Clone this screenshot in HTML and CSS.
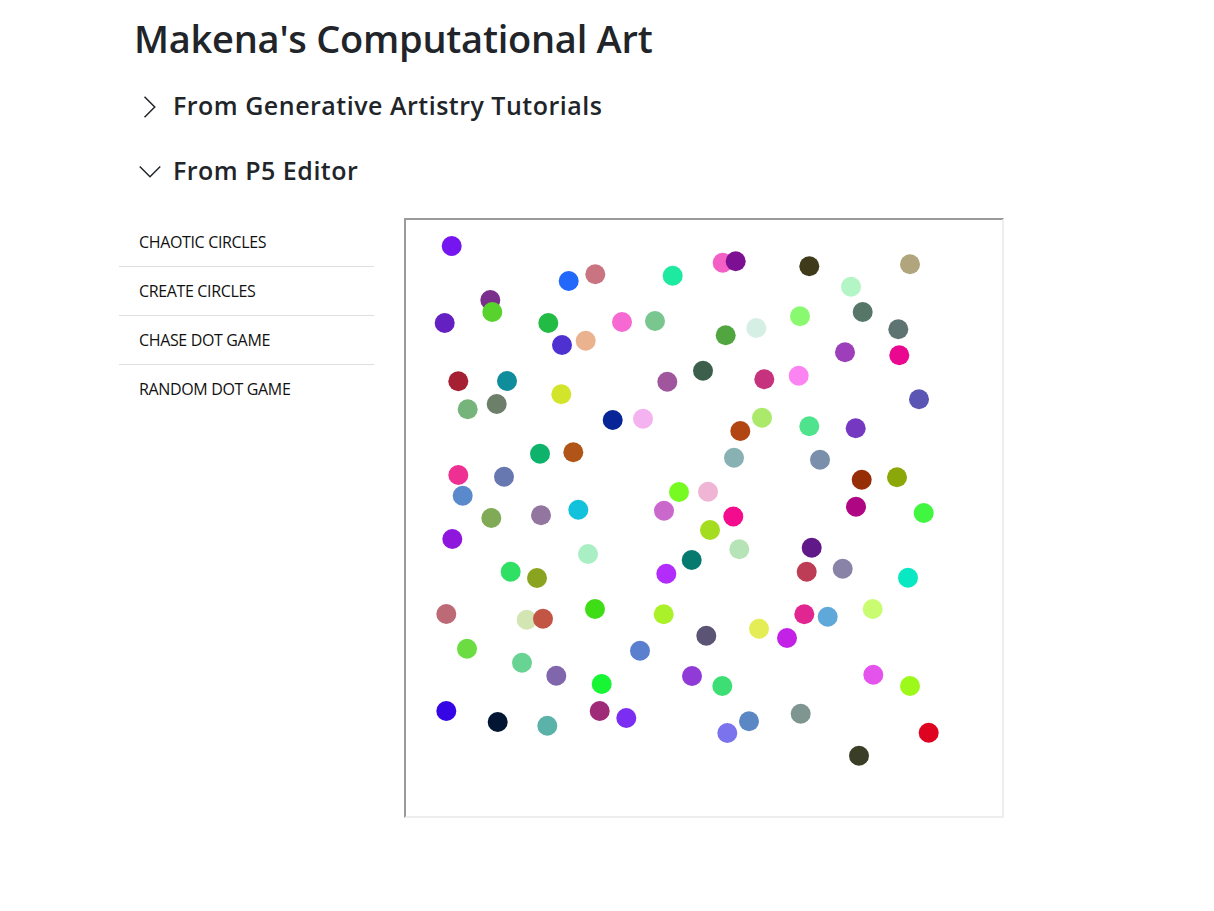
FILE: index.html
```html
<!DOCTYPE html>
<html lang="en">
<head>
<meta charset="utf-8">
<title>Makena's Computational Art</title>
<link rel="stylesheet" href="styles.css">
</head>
<body>
<main class="page">
  <h1 class="title">Makena's Computational Art</h1>

  <section class="group">
    <div class="group-head">
      <svg class="chev" viewBox="0 0 22 22" aria-hidden="true"><path d="M5.5 0.75 L15.75 11 L5.5 21.25"/></svg>
      <h4 class="group-title">From Generative Artistry Tutorials</h4>
    </div>
  </section>

  <section class="group open">
    <div class="group-head">
      <svg class="chev" viewBox="0 0 22 22" aria-hidden="true"><path d="M0.75 5.5 L11 15.75 L21.25 5.5"/></svg>
      <h4 class="group-title">From P5 Editor</h4>
    </div>
    <div class="group-body">
      <ul class="sketch-list">
        <li class="sketch-item">Chaotic Circles</li>
        <li class="sketch-item">Create Circles</li>
        <li class="sketch-item">Chase Dot Game</li>
        <li class="sketch-item">Random Dot Game</li>
      </ul>
      <div class="canvas">
        <svg class="art" width="596" height="596" viewBox="406 220 596 596">
          <circle cx="451.7" cy="246" r="10" fill="#7516f0"/>
          <circle cx="568.7" cy="281" r="10" fill="#2269fb"/>
          <circle cx="595.3" cy="274.3" r="10" fill="#c97480"/>
          <circle cx="672.7" cy="275.7" r="10" fill="#1de9a0"/>
          <circle cx="490.3" cy="300" r="10" fill="#7b2f8c"/>
          <circle cx="492.3" cy="312" r="10" fill="#58d22c"/>
          <circle cx="444.7" cy="323" r="10" fill="#6420c0"/>
          <circle cx="548.3" cy="323" r="10" fill="#22bb44"/>
          <circle cx="562" cy="345" r="10" fill="#4f31d2"/>
          <circle cx="585.7" cy="340.7" r="10" fill="#ebb290"/>
          <circle cx="622" cy="322" r="10" fill="#f668d2"/>
          <circle cx="655" cy="321" r="10" fill="#79c78f"/>
          <circle cx="458.3" cy="381.3" r="10" fill="#a52033"/>
          <circle cx="507" cy="381" r="10" fill="#0f8d9a"/>
          <circle cx="467.7" cy="409.3" r="10" fill="#77b47c"/>
          <circle cx="496.7" cy="404" r="10" fill="#6b7f69"/>
          <circle cx="561.3" cy="394.3" r="10" fill="#d2e52a"/>
          <circle cx="667.3" cy="381.7" r="10" fill="#a0569c"/>
          <circle cx="703" cy="370.7" r="10" fill="#3b5f4a"/>
          <circle cx="612.7" cy="420" r="10" fill="#072596"/>
          <circle cx="643" cy="418.7" r="10" fill="#f4b2f0"/>
          <circle cx="540" cy="453.7" r="10" fill="#0db36b"/>
          <circle cx="573.3" cy="452.3" r="10" fill="#b05517"/>
          <circle cx="458.3" cy="475" r="10" fill="#ef3093"/>
          <circle cx="504" cy="476.7" r="10" fill="#6777b0"/>
          <circle cx="462.7" cy="495.7" r="10" fill="#5b8acc"/>
          <circle cx="491.3" cy="518" r="10" fill="#81aa57"/>
          <circle cx="541" cy="515.3" r="10" fill="#93769f"/>
          <circle cx="578.3" cy="509.7" r="10" fill="#12c2dc"/>
          <circle cx="679" cy="492" r="10" fill="#77fa22"/>
          <circle cx="664" cy="510.7" r="10" fill="#cb68cc"/>
          <circle cx="708" cy="491.7" r="10" fill="#f0b5d4"/>
          <circle cx="722.7" cy="262.7" r="10" fill="#f45fc5"/>
          <circle cx="735.7" cy="261.3" r="10" fill="#7d0f93"/>
          <circle cx="809.3" cy="266.3" r="10" fill="#3e3a1a"/>
          <circle cx="910" cy="264.3" r="10" fill="#b1a57e"/>
          <circle cx="851" cy="286.7" r="10" fill="#b4f5c5"/>
          <circle cx="862.7" cy="312" r="10" fill="#56766a"/>
          <circle cx="898.3" cy="329.3" r="10" fill="#5d7473"/>
          <circle cx="800" cy="316.3" r="10" fill="#89fa70"/>
          <circle cx="756.3" cy="328" r="10" fill="#d5efe4"/>
          <circle cx="725.7" cy="335.3" r="10" fill="#52a63f"/>
          <circle cx="845" cy="352.3" r="10" fill="#9d3fbb"/>
          <circle cx="899.3" cy="355.3" r="10" fill="#e9088f"/>
          <circle cx="764.3" cy="379.3" r="10" fill="#c6327e"/>
          <circle cx="798.7" cy="375.7" r="10" fill="#fc84f2"/>
          <circle cx="919" cy="399.3" r="10" fill="#5b55b3"/>
          <circle cx="762" cy="417.7" r="10" fill="#abe96a"/>
          <circle cx="740.3" cy="431" r="10" fill="#b24612"/>
          <circle cx="809.3" cy="426.3" r="10" fill="#50e38e"/>
          <circle cx="855.7" cy="428.3" r="10" fill="#7439c0"/>
          <circle cx="734" cy="457.7" r="10" fill="#87b1b3"/>
          <circle cx="820" cy="459.7" r="10" fill="#7a8fab"/>
          <circle cx="861.7" cy="479.7" r="10" fill="#972f06"/>
          <circle cx="897" cy="477.3" r="10" fill="#8ba708"/>
          <circle cx="856" cy="506.7" r="10" fill="#af0683"/>
          <circle cx="923.7" cy="513" r="10" fill="#41f641"/>
          <circle cx="733.3" cy="516.5" r="10" fill="#f30c8d"/>
          <circle cx="452.3" cy="539" r="10" fill="#8e16dd"/>
          <circle cx="588" cy="554" r="10" fill="#a9efc3"/>
          <circle cx="691.7" cy="560" r="10" fill="#077a70"/>
          <circle cx="666.3" cy="573.7" r="10" fill="#b22dfb"/>
          <circle cx="510.7" cy="571.7" r="10" fill="#30e065"/>
          <circle cx="537" cy="578" r="10" fill="#8ba420"/>
          <circle cx="446.3" cy="614" r="10" fill="#bd6a77"/>
          <circle cx="526.7" cy="619.7" r="10" fill="#d3e5b2"/>
          <circle cx="543" cy="618.7" r="10" fill="#c35544"/>
          <circle cx="595" cy="609" r="10" fill="#3fdd16"/>
          <circle cx="663.7" cy="614.3" r="10" fill="#abf129"/>
          <circle cx="706.3" cy="635.7" r="10" fill="#5b5475"/>
          <circle cx="467" cy="648.7" r="10" fill="#6bdd43"/>
          <circle cx="640" cy="650.7" r="10" fill="#5a7fcf"/>
          <circle cx="522" cy="662.7" r="10" fill="#69d394"/>
          <circle cx="556.3" cy="675.7" r="10" fill="#8066ac"/>
          <circle cx="601.7" cy="684" r="10" fill="#17f535"/>
          <circle cx="692" cy="676" r="10" fill="#903bd8"/>
          <circle cx="446.3" cy="711" r="10" fill="#3505e6"/>
          <circle cx="497.7" cy="722" r="10" fill="#021633"/>
          <circle cx="547.3" cy="725.7" r="10" fill="#5bb2a9"/>
          <circle cx="599.7" cy="711" r="10" fill="#9f2a77"/>
          <circle cx="626.3" cy="718" r="10" fill="#7b2ef2"/>
          <circle cx="710" cy="530" r="10" fill="#a4dd1f"/>
          <circle cx="739.3" cy="549.3" r="10" fill="#b6e4b6"/>
          <circle cx="811.7" cy="547.7" r="10" fill="#611888"/>
          <circle cx="806.7" cy="571.7" r="10" fill="#bd3d56"/>
          <circle cx="842.7" cy="568.7" r="10" fill="#8983a8"/>
          <circle cx="908" cy="577.7" r="10" fill="#07e8c3"/>
          <circle cx="872.7" cy="609" r="10" fill="#cafc72"/>
          <circle cx="804.3" cy="614.3" r="10" fill="#e22691"/>
          <circle cx="827.7" cy="616.7" r="10" fill="#5ea9da"/>
          <circle cx="759" cy="628.7" r="10" fill="#e4ed56"/>
          <circle cx="787" cy="638" r="10" fill="#c421e6"/>
          <circle cx="873.3" cy="674.7" r="10" fill="#e454ec"/>
          <circle cx="910" cy="686" r="10" fill="#9cf919"/>
          <circle cx="722.3" cy="686" r="10" fill="#3ddf74"/>
          <circle cx="800.7" cy="713.7" r="10" fill="#7f9590"/>
          <circle cx="749" cy="721.3" r="10" fill="#5b87c4"/>
          <circle cx="727.3" cy="733" r="10" fill="#7b73ee"/>
          <circle cx="928.7" cy="732.7" r="10" fill="#df0322"/>
          <circle cx="859" cy="755.7" r="10" fill="#3b3e26"/>
        </svg>
      </div>
    </div>
  </section>
</main>
</body>
</html>
```

FILE: styles.css
```css
* { box-sizing: border-box; }

html, body {
  margin: 0;
  padding: 0;
  background: #ffffff;
}

body {
  font-family: "Open Sans", "Noto Sans", "Liberation Sans", sans-serif;
  color: #212529;
}

.page {
  padding: 14px 0 40px 119px;
}

.title {
  margin: 0;
  padding-left: 15px;
  font-size: 38px;
  font-weight: 600;
  line-height: 48px;
  letter-spacing: -0.25px;
  color: #212529;
}

.group-head {
  display: flex;
  align-items: center;
  gap: 12px;
  padding-left: 20px;
  height: 29px;
}

.group:first-of-type .group-head {
  margin-top: 29px;
}

.group + .group .group-head {
  margin-top: 36px;
}

.chev {
  width: 22px;
  height: 22px;
  flex: none;
  margin-top: 2px;
}

.chev path {
  fill: none;
  stroke: #212529;
  stroke-width: 1.5;
}

.group-title {
  margin: 0;
  font-size: 25px;
  font-weight: 600;
  line-height: 29px;
  letter-spacing: 0.5px;
  color: #212529;
}

.group-body {
  display: flex;
  align-items: flex-start;
  gap: 30px;
  margin-top: 33px;
}

.sketch-list {
  list-style: none;
  margin: 0;
  padding: 0;
  width: 255px;
  flex: none;
}

.sketch-item {
  padding: 12px 20px;
  font-size: 16px;
  line-height: 24px;
  letter-spacing: -0.35px;
  text-transform: uppercase;
  color: #111111;
  border-bottom: 1px solid #dfdfdf;
}

.sketch-item:last-child {
  border-bottom: none;
}

.canvas {
  width: 600px;
  height: 600px;
  flex: none;
  border-style: solid;
  border-width: 2px;
  border-color: #9a9a9a #eeeeee #eeeeee #9a9a9a;
  background: #ffffff;
}

.art {
  display: block;
}
```
